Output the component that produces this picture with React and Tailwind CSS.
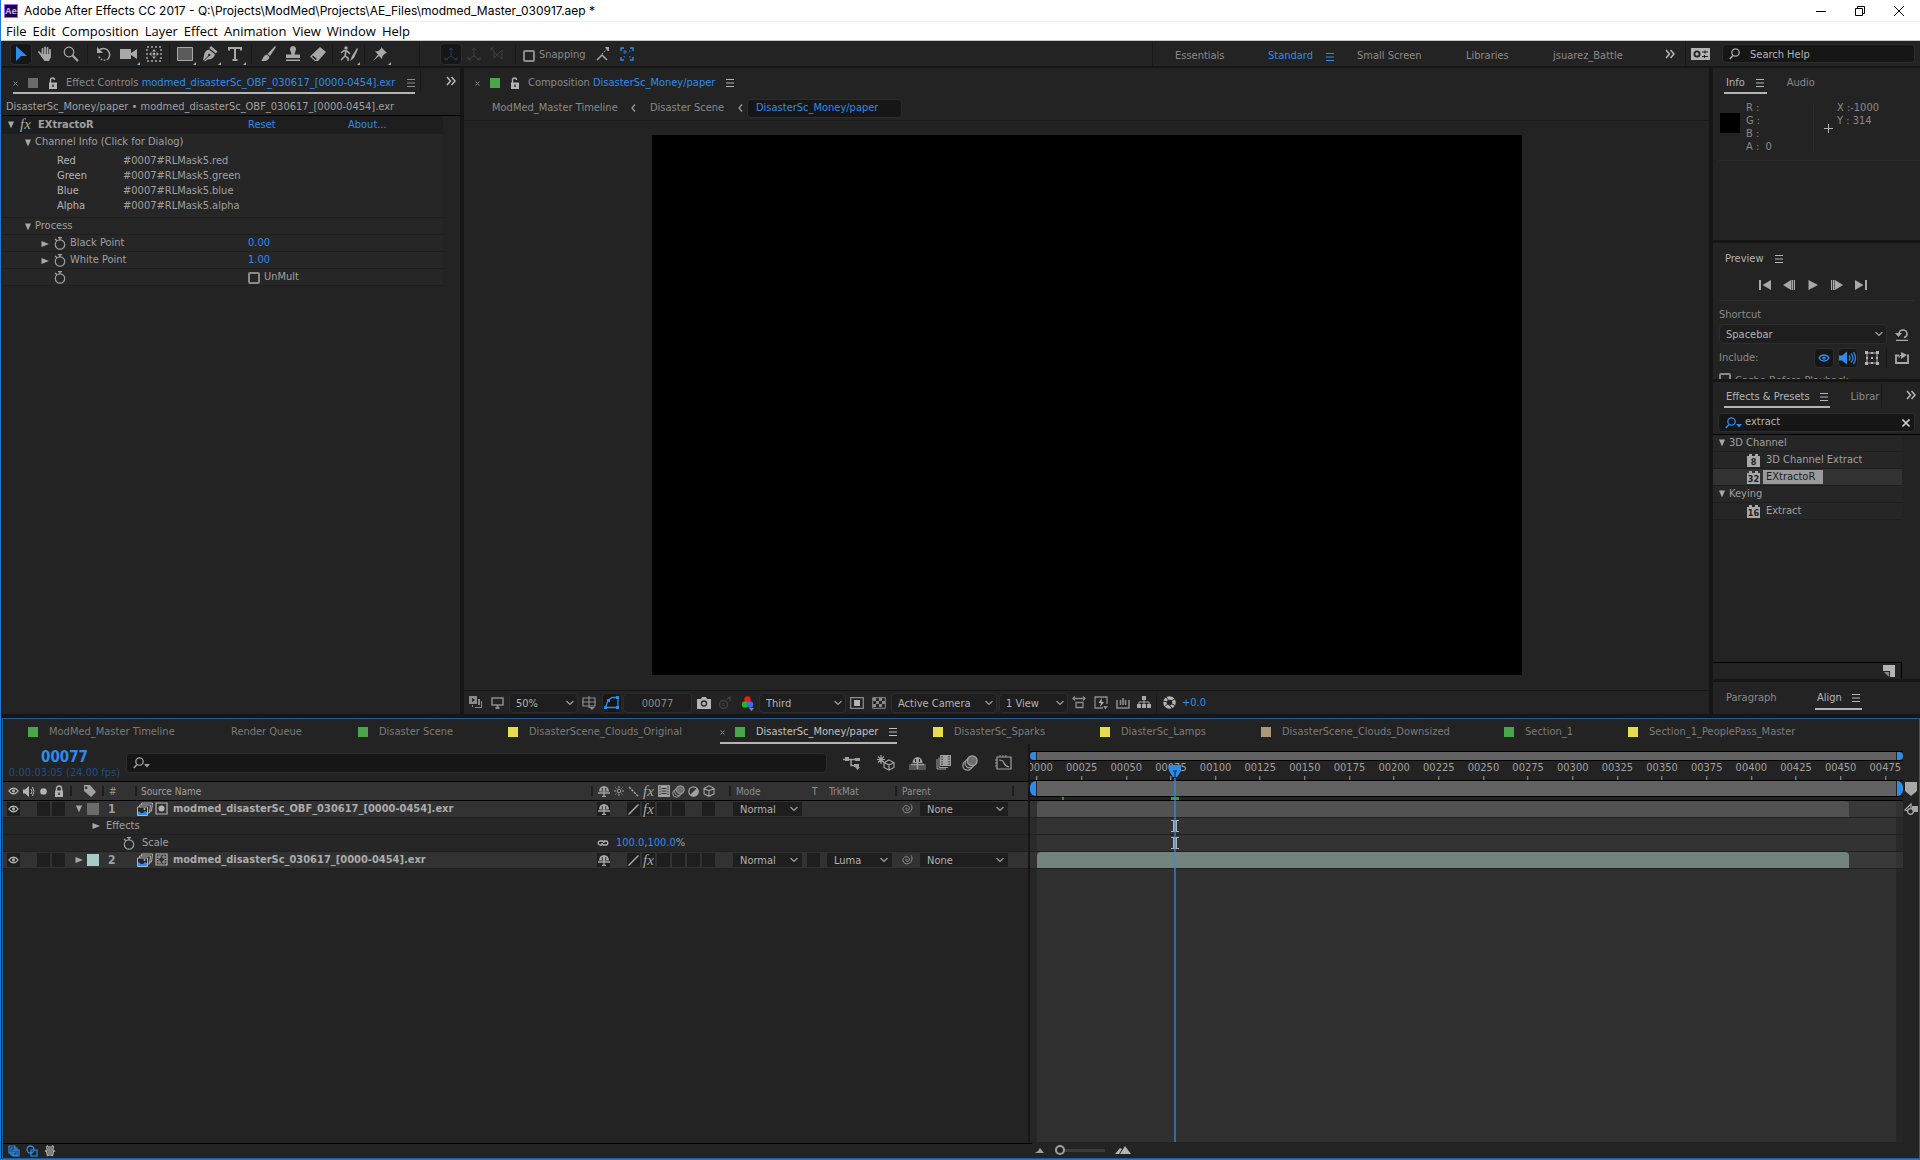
import React, { useState } from 'react';
import clsx from 'clsx';

const TOTAL_FRAMES = 481;
const CURRENT_FRAME = 77;
const ticks = Array.from({ length: 20 }, (_, i) => i * 25);
const pct = (frame) => `${(frame / TOTAL_FRAMES) * 100}%`;

const menus = ['File', 'Edit', 'Composition', 'Layer', 'Effect', 'Animation', 'View', 'Window', 'Help'];

const channels = [
  { name: 'Red', value: '#0007#RLMask5.red' },
  { name: 'Green', value: '#0007#RLMask5.green' },
  { name: 'Blue', value: '#0007#RLMask5.blue' },
  { name: 'Alpha', value: '#0007#RLMask5.alpha' }
];

/* ---------- icons ---------- */

const Icon = ({ w = 16, h = 16, className, children }) => (
  <svg width={w} height={h} viewBox={`0 0 ${w} ${h}`} fill="none" stroke="currentColor" className={clsx('shrink-0', className)} aria-hidden="true">
    {children}
  </svg>
);

const MenuIcon = ({ className }) => (
  <Icon w={8} h={8} className={className}>
    <path d="M0 .5h8M0 4h8M0 7.5h8" />
  </Icon>
);

const CloseX = () => (
  <Icon w={5} h={5} className="text-[#8a8a8a]">
    <path d="M.5.5l4 4M4.5.5l-4 4" />
  </Icon>
);

const DoubleChevron = () => (
  <Icon w={10} h={10} className="text-[#b4b4b4]">
    <path d="M1 1l3.500 4L1 9M5.500 1L9 5 5.500 9" strokeWidth="1.600" />
  </Icon>
);

const Lock = ({ open = false, className }) => (
  <Icon w={10} h={12} className={className}>
    <path d={open ? 'M2.500 6V3a2 2 0 014 0' : 'M2.500 6V3.500a2.500 2.500 0 015 0V6'} strokeWidth="1.400" />
    <path d="M1 5.500h8V12H1z" fill="currentColor" stroke="none" />
    <path d="M5 7.500v2.500" stroke="#232323" strokeWidth="1.400" />
  </Icon>
);

const Twirl = ({ open }) => (
  <Icon w={8} h={8} className="text-[#a8a8a8]">
    <path d={open ? 'M1 .5h6L4 7.500z' : 'M.5 1v6L8 4z'} fill="currentColor" stroke="none" />
  </Icon>
);

const Stopwatch = () => (
  <Icon w={12} h={13} className="text-[#a0a0a0]">
    <circle cx="6" cy="7.500" r="4.700" strokeWidth="1.200" />
    <path d="M4 .7h4M6 1v2M1 2l2 1.700" strokeWidth="1.300" />
  </Icon>
);

const Eye = ({ className }) => (
  <Icon w={12} h={10} className={className}>
    <path d="M1 5c2.500-4 7.500-4 10 0-2.500 4-7.500 4-10 0z" strokeWidth="1.400" />
    <circle cx="6" cy="5" r="1.600" fill="currentColor" stroke="none" />
  </Icon>
);

const Speaker = ({ className }) => (
  <Icon w={18} h={14} className={className}>
    <path d="M0 4.500h3L8 .5v13L3 9.500H0z" fill="currentColor" stroke="none" />
    <path d="M10 4.500q2 2.500 0 5M12 2.500q4 4.500 0 9M14.500 1q4 6 0 12" strokeWidth="1.300" />
  </Icon>
);

const Search = ({ drop = false, className }) => (
  <Icon w={17} h={12} className={className}>
    <circle cx="6.500" cy="4.500" r="3.700" strokeWidth="1.300" />
    <path d="M4 7.500L.8 11" strokeWidth="1.600" />
    {drop && <path d="M11 7h6l-3 3.500z" fill="currentColor" stroke="none" />}
  </Icon>
);

const Chevron = ({ className }) => (
  <Icon w={8} h={5} className={className}>
    <path d="M.5.5L4 4 7.500.5" strokeWidth="1.200" />
  </Icon>
);

const Fx = () => <span className="font-['Liberation_Serif',serif] text-[15px] leading-4 italic text-[#a8a8a8]">fx</span>;

const Shy = () => (
  <Icon w={12} h={12}>
    <path d="M1 6.500a5 5.500 0 0110 0z" fill="currentColor" stroke="none" />
    <path d="M4.300 3v3M7.700 3v3" stroke="#323232" />
    <path d="M0 8h12M6 6v6M4 11.500h4" strokeWidth="1.300" />
  </Icon>
);

const Sun = () => (
  <Icon w={10} h={10}>
    <circle cx="5" cy="5" r="1.800" />
    <path d="M5 0v2M5 8v2M0 5h2M8 5h2M1.500 1.500l1 1M7.500 7.500l1 1M8.500 1.500l-1 1M1.500 8.500l1-1" />
  </Icon>
);

const Film = () => (
  <Icon w={12} h={12}>
    <path d="M0 0h12v12H0z" fill="currentColor" stroke="none" />
    <path d="M2 1v10M10 1v10" stroke="#323232" strokeDasharray="1.500 1" />
    <path d="M3.500 3.500h5M3.500 6h5M3.500 8.500h5" stroke="#323232" />
  </Icon>
);

const MotionBlur = ({ size = 13 }) => (
  <svg width={size} height={size} viewBox="0 0 13 13" fill="none" stroke="currentColor" className="shrink-0" aria-hidden="true">
    <circle cx="4.500" cy="8.500" r="3.800" />
    <circle cx="6.300" cy="6.700" r="3.800" fill="#323232" />
    <circle cx="8.300" cy="4.700" r="4" fill="#6e6e6e" />
  </svg>
);

const HalfCircle = () => (
  <Icon w={11} h={11}>
    <circle cx="5.500" cy="5.500" r="4.700" strokeWidth="1.200" />
    <path d="M2 9A4.800 4.800 0 009 2z" fill="currentColor" stroke="none" />
  </Icon>
);

const Cube = ({ size = 12 }) => (
  <svg width={size} height={size} viewBox="0 0 12 12" fill="none" stroke="currentColor" className="shrink-0" aria-hidden="true">
    <path d="M6 .8l5 2.500v5.500l-5 2.500-5-2.500V3.300zM1 3.300l5 2.500 5-2.500M6 5.800v5.500" strokeWidth="1.100" />
  </svg>
);

const Spiral = () => (
  <Icon w={12} h={12} className="text-[#8a8a8a]">
    <path d="M6.500 5.500c-.8-.8-2 0-1.500 1.200.6 1.200 2.600 1 3.200-.5.700-2-1-3.800-3-3.600C2.800 2.900 1.500 5 2 7c.6 2.200 3 3.200 5.200 2.600C9.800 8.900 11.200 6.500 11 4c-.1-1-.5-2-1-2.700" />
  </Icon>
);

const FrameStack = () => (
  <Icon w={16} h={14}>
    <path d="M4.500 3V1h11l-1 8h-2M2.500 5V3h11l-1 8h-2" />
    <path d="M.5 5h10v8.500H.5z" fill="#232323" />
    <path d="M1 13V9.500h1.500L4 11h2l2-2 2 1v3z" fill="#2d8ceb" stroke="none" />
    <circle cx="7.500" cy="7" r="1" fill="currentColor" stroke="none" />
  </Icon>
);

const MatteIcon = ({ luma }) => (
  <Icon w={13} h={13}>
    <path d="M1 1h11v11H1z" strokeWidth="1.200" />
    {luma ? (
      <path d="M3 3h2v2H3zM8 3h2v2H8zM3 8h2v2H3zM8 8h2v2H8zM6 1.500v2M6 9.500v2M1.500 6.500h2M9.500 6.500h2" strokeWidth=".8" />
    ) : (
      <circle cx="6.500" cy="6.500" r="3" fill="currentColor" stroke="none" />
    )}
  </Icon>
);

const BinIcon = ({ bits }) => (
  <svg width="13" height="13" className="shrink-0" aria-hidden="true">
    <path d="M0 2h2V0h3v2h3V0h3v2h2v11H0z" fill="#a8a8a8" />
    <text x="6.500" y="11" textAnchor="middle" className="text-[9px] font-bold" fill="#1c1c1c">{bits}</text>
  </svg>
);

const AxisIcon = ({ className }) => (
  <Icon w={14} h={14} className={className}>
    <path d="M7 1v8M7 9l-5.500 3.500M7 9l5.500 3.500M5 3l2-2 2 2M1 10v2.700h3M13 10v2.700h-3" />
  </Icon>
);

/* ---------- controls ---------- */

const ToolButton = ({ label, active, flyout, className, children }) => (
  <button
    type="button"
    aria-label={label}
    className={clsx('relative flex h-[22px] w-[22px] shrink-0 items-center justify-center text-[#a8a8a8]', active && 'rounded-sm border border-[#2d2d2d] bg-[#161616]', className)}
  >
    {children}
    {flyout && (
      <svg width="3" height="3" className="absolute right-0 bottom-0" aria-hidden="true">
        <path d="M3 0v3H0z" fill="#a8a8a8" />
      </svg>
    )}
  </button>
);

const Divider = ({ className }) => <span className={clsx('h-5 w-px shrink-0 bg-[#1a1a1a]', className)} />;

const Select = ({ label, value, className, boxClass }) => (
  <span className={clsx('relative flex shrink-0', className)}>
    <select
      aria-label={label}
      defaultValue={value}
      className={clsx('h-full w-full appearance-none pt-0.5 pr-4 text-[11px] leading-3 text-[#b4b4b4] outline-none', boxClass || 'border border-[#2d2d2d] rounded-sm bg-[#1e1e1e] pl-1.5')}
    >
      <option>{value}</option>
    </select>
    <Chevron className="pointer-events-none absolute top-1/2 right-1 -translate-y-1/2 text-[#a0a0a0]" />
  </span>
);

const CheckBox = ({ label, className }) => (
  <label className={clsx('flex items-center gap-1', className)}>
    <input type="checkbox" className="h-3 w-3 appearance-none rounded-xs border-2 border-[#8a8a8a]" />
    {label}
  </label>
);

/* ---------- window chrome ---------- */

const TitleBar = () => (
  <header className="bg-white font-['Open_Sans','Noto_Sans',sans-serif] text-black">
    <div className="flex h-[22px] items-center border-b border-[#f0f0f0] pl-[3px]">
      <span className="flex h-3.5 w-3.5 items-center justify-center border border-[#9b6cf0] bg-[#1f0040] text-[9px] leading-3 font-bold text-[#c9a0ff]">Ae</span>
      <h1 className="ml-1.5 font-['Inter','Open_Sans',sans-serif] text-[12px] leading-5 whitespace-nowrap">
        Adobe After Effects CC 2017 - Q:\Projects\ModMed\Projects\AE_Files\modmed_Master_030917.aep *
      </h1>
      <div className="ml-auto flex pr-px">
        <button type="button" aria-label="Minimize" className="flex h-5 w-[39px] items-center justify-center">
          <Icon w={10} h={10}><path d="M0 5.500h10" /></Icon>
        </button>
        <button type="button" aria-label="Restore" className="flex h-5 w-[39px] items-center justify-center">
          <Icon w={10} h={10}><path d="M.5 2.500h7v7h-7zM2.500 2.500v-2h7v7h-2" /></Icon>
        </button>
        <button type="button" aria-label="Close" className="flex h-5 w-10 items-center justify-center">
          <Icon w={10} h={10}><path d="M0 0l10 10M10 0L0 10" /></Icon>
        </button>
      </div>
    </div>
    <nav className="flex h-[19px] items-center gap-1.5 border-b border-[#c8c8c8] pl-[5px] text-[13px] leading-[18px]">
      {menus.map((m) => (
        <button key={m} type="button">{m}</button>
      ))}
    </nav>
  </header>
);

const Toolbar = () => (
  <div className="flex h-[25px] items-center bg-[#232323]">
    <div className="flex items-center pl-[9px]">
      <ToolButton label="Selection" active>
        <Icon w={12} h={16} className="text-[#2d8ceb]"><path d="M1 0l11 10H6l-5 5z" fill="currentColor" stroke="none" /></Icon>
      </ToolButton>
      <ToolButton label="Hand" className="ml-[3px]">
        <Icon>
          <path d="M4.500 8V3M7 7.500V1.500M9.500 7.500V2M12 8.500V4M1 6l3.500 4.500" strokeWidth="1.800" strokeLinecap="round" />
          <path d="M3.600 8h9.300v3L11 15H6.500L3 10z" fill="currentColor" stroke="none" />
        </Icon>
      </ToolButton>
      <ToolButton label="Zoom" className="ml-[3px]">
        <Icon><circle cx="6" cy="6" r="4.800" strokeWidth="1.200" /><path d="M9.500 9.500L15 15" strokeWidth="2.200" /></Icon>
      </ToolButton>
      <Divider className="mx-[5px]" />
      <ToolButton label="Rotate">
        <Icon><path d="M3 4.500a6 6 0 019 8.500" strokeWidth="1.500" /><path d="M12 13a6 6 0 01-9.500-4" strokeDasharray="1.500 1.500" strokeWidth="1.500" /><path d="M1 1v6h6z" fill="currentColor" stroke="none" /></Icon>
      </ToolButton>
      <ToolButton label="Camera" flyout className="ml-[3px]">
        <Icon w={18}><path d="M0 3h11v10H0zM11 7l6-4v10l-6-4z" fill="currentColor" stroke="none" /></Icon>
      </ToolButton>
      <ToolButton label="Pan Behind" className="ml-[3px]">
        <Icon><path d="M1 1h14v14H1z" strokeDasharray="2 2" strokeWidth="1.400" /><path d="M8 3l2 2.500H6zM8 13l2-2.500H6zM3 8l2.500-2v4zM13 8l-2.500-2v4z" fill="currentColor" stroke="none" /><circle cx="8" cy="8" r="1.500" fill="currentColor" stroke="none" /></Icon>
      </ToolButton>
      <Divider className="mx-[4px]" />
      <ToolButton label="Rectangle" flyout>
        <Icon><path d="M.5 1.500h15v13H.5z" fill="#5a5a5a" /></Icon>
      </ToolButton>
      <ToolButton label="Pen" flyout className="ml-[3px]">
        <Icon>
          <path d="M9 0l6.500 5.500-1.800 2L7.200 2zM7 3.500l6 5c-1 3.500-3.500 5-7.500 5L3 15.500 1 14 2 9.500C2.500 6.500 4 4 7 3.500z" fill="currentColor" stroke="none" />
          <path d="M1.500 15l5-5" stroke="#232323" />
          <circle cx="7.200" cy="9" r="1.200" fill="#232323" stroke="none" />
        </Icon>
      </ToolButton>
      <ToolButton label="Type" flyout className="ml-[3px]">
        <Icon w={14}><path d="M1 4.500V2h12v2.500M7 2v12M4.500 14h5" strokeWidth="2" /></Icon>
      </ToolButton>
      <Divider className="mx-[5px]" />
      <ToolButton label="Brush">
        <Icon><path d="M15 0l1 1-6 9-2.500-2zM7 8.500L9.500 11c-1 4-5 4.500-8.500 4 2-1 1.500-5.500 6-6.500z" fill="currentColor" stroke="none" /></Icon>
      </ToolButton>
      <ToolButton label="Clone Stamp" className="ml-[3px]">
        <Icon><path d="M8 0a3.200 3.200 0 012.500 5L9.500 8.500H15V12H1V8.500h5.500L5.500 5A3.200 3.200 0 018 0zM1 13.500h14V15H1z" fill="currentColor" stroke="none" /></Icon>
      </ToolButton>
      <ToolButton label="Eraser" className="ml-[3px]">
        <Icon><path d="M10 1l6 5-8 9H5L0 10.500zM3 9.500l-1 1.200L5.500 14 7 13z" fillRule="evenodd" fill="currentColor" stroke="none" /></Icon>
      </ToolButton>
      <Divider className="mr-[5px] ml-[3px]" />
      <ToolButton label="Roto Brush" flyout>
        <Icon w={18}><circle cx="6" cy="2" r="1.700" fill="currentColor" stroke="none" /><path d="M1 7l3-2.500 3 .5 3 3M6 5l-1 5 3 2v3M5 10l-4 4" strokeWidth="1.600" /><path d="M17 2l-5 8-2 5 4-3 4-9z" fill="currentColor" stroke="none" /></Icon>
      </ToolButton>
      <Divider className="mx-[4px]" />
      <ToolButton label="Puppet Pin" flyout>
        <Icon><path d="M9 1l6 6-2 .5-2.500 2.500-.5 3-3-3L1 15l5-6.500-3-3 3.500-.5L9 2.500z" fill="currentColor" stroke="none" /></Icon>
      </ToolButton>
    </div>
    <Divider className="ml-7 h-full" />
    <div className="ml-5 flex items-center gap-px">
      <ToolButton label="Local Axis" active><AxisIcon className="text-[#1d3f63]" /></ToolButton>
      <ToolButton label="World Axis"><AxisIcon className="text-[#404040]" /></ToolButton>
      <ToolButton label="View Axis">
        <Icon w={14} h={14} className="text-[#404040]"><path d="M1 1l3 3M4 4v7l8-8v9L4 5M1 4V1h3" /></Icon>
      </ToolButton>
    </div>
    <Divider className="mx-[7px]" />
    <CheckBox label="Snapping" className="pt-1 text-[11px] text-[#8a8a8a]" />
    <ToolButton label="Snap Edges" className="ml-1.5">
      <Icon w={14} h={14}><path d="M1 13l5-5 5 5" strokeWidth="1.500" /><path d="M6 7l4-4" strokeDasharray="1.500 1" /><path d="M9 0h4v4h-1.500z" fill="currentColor" stroke="none" /></Icon>
    </ToolButton>
    <ToolButton label="Snap Features" className="ml-0.5">
      <Icon w={14} h={14} className="text-[#2d8ceb]"><path d="M1 4V1h3M10 1h3v3M13 10v3h-3M4 13H1v-3" strokeWidth="1.400" /><path d="M4 4h2v2H4zM9 4h1v1M4 9v1h1M9 10h1V9" strokeWidth=".8" /></Icon>
    </ToolButton>

    <nav className="ml-auto flex h-full items-center border-l border-[#1a1a1a] pl-[22px] text-[11px] text-[#8a8a8a]">
      <button type="button" className="w-[93px] pt-1.5 text-left">Essentials</button>
      <button type="button" className="flex w-[89px] items-center gap-[13px] pt-1.5 text-[#2d8ceb]">Standard <MenuIcon /></button>
      <button type="button" className="w-[109px] pt-1.5 text-left">Small Screen</button>
      <button type="button" className="w-[87px] pt-1.5 text-left">Libraries</button>
      <button type="button" className="w-[112px] pt-1.5 text-left">jsuarez_Battle</button>
      <button type="button" aria-label="More workspaces"><DoubleChevron /></button>
    </nav>
    <Divider className="ml-[10px] h-full" />
    <button type="button" aria-label="Sync Settings" className="ml-[5px] flex">
      <Icon w={19} h={12} className="text-[#b4b4b4]">
        <path d="M0 0h19v12H0z" fill="currentColor" stroke="none" />
        <circle cx="6" cy="6" r="2.600" stroke="#232323" strokeWidth="1.800" />
        <path d="M11 4h6M14 2.500V5.500M11 8.500h6M13.500 7v3" stroke="#232323" strokeWidth="1.200" />
      </Icon>
    </button>
    <label className="mr-[5px] ml-3 flex h-[19px] w-[193px] items-center gap-1 rounded-sm border border-[#2d2d2d] bg-[#161616] pl-1.5 text-[#a8a8a8]">
      <Search />
      <input type="text" aria-label="Search Help" placeholder="Search Help" className="w-full bg-transparent pt-0.5 text-[11px] leading-4 outline-none placeholder:text-[#b4b4b4]" />
    </label>
  </div>
);

/* ---------- effect controls ---------- */

const EffectRow = ({ className, children }) => (
  <div className={clsx('flex h-[17px] items-center border-t border-[#1e1e1e] pt-px', className)}>{children}</div>
);

const EffectControls = () => (
  <section className="flex w-[458px] shrink-0 flex-col bg-[#232323]">
    <div className="flex h-[31px] items-start">
      <div className="ml-[11px] flex h-[26px] items-center border-b-2 border-[#b4b4b4] pt-1.5">
        <CloseX />
        <span className="ml-2.5 h-2.5 w-2.5 bg-[#6b6b6b]" />
        <Lock open className="ml-2.5 text-[#b4b4b4]" />
        <span className="ml-2 w-[340px] text-[11px] whitespace-nowrap text-[#8a8a8a]">
          Effect Controls <span className="text-[#2d8ceb]">modmed_disasterSc_OBF_030617_[0000-0454].exr</span>
        </span>
        <MenuIcon className="ml-px text-[#8a8a8a]" />
      </div>
      <span className="ml-[5px] h-6 w-px bg-[#1a1a1a]" />
      <button type="button" aria-label="More panels" className="mt-2 mr-1 ml-auto"><DoubleChevron /></button>
    </div>
    <p className="flex h-[17px] items-center border-b border-black pt-px pl-1 text-[11px] text-[#a0a0a0]">
      DisasterSc_Money/paper • modmed_disasterSc_OBF_030617_[0000-0454].exr
    </p>
    <div className="mr-[17px] bg-[#262626] text-[11px] text-[#a0a0a0]">
      <div className="flex h-[18px] items-center bg-[#1e1e1e] pl-[5px]">
        <Twirl open />
        <span className="ml-[5px] w-[18px]"><Fx /></span>
        <span className="w-[210px] font-bold">EXtractoR</span>
        <a href="#reset" className="w-[100px] text-[#2d8ceb]">Reset</a>
        <a href="#about" className="text-[#2d8ceb]">About...</a>
      </div>
      <div className="flex h-[19px] items-center pb-0.5 pl-[22px]">
        <Twirl open />
        <span className="ml-[3px]">Channel Info (Click for Dialog)</span>
      </div>
      <dl className="grid grid-cols-[66px_1fr] gap-x-0 pb-1 pl-[55px] leading-[15px]">
        {channels.map((c) => (
          <React.Fragment key={c.name}>
            <dt className="text-[#b4b4b4]">{c.name}</dt>
            <dd>{c.value}</dd>
          </React.Fragment>
        ))}
      </dl>
      <EffectRow className="pl-[22px]">
        <Twirl open />
        <span className="ml-[3px]">Process</span>
      </EffectRow>
      <EffectRow className="pl-[39px]">
        <Twirl />
        <span className="ml-[5px]"><Stopwatch /></span>
        <span className="ml-1 w-[178px]">Black Point</span>
        <span className="text-[#2d8ceb]">0.00</span>
      </EffectRow>
      <EffectRow className="pl-[39px]">
        <Twirl />
        <span className="ml-[5px]"><Stopwatch /></span>
        <span className="ml-1 w-[178px]">White Point</span>
        <span className="text-[#2d8ceb]">1.00</span>
      </EffectRow>
      <EffectRow className="h-[18px] border-b pl-[52px]">
        <span className="w-[194px]"><Stopwatch /></span>
        <CheckBox label="UnMult" />
      </EffectRow>
    </div>
  </section>
);

/* ---------- composition viewer ---------- */

const BackChevron = () => (
  <Icon w={5} h={8} className="text-[#a0a0a0]"><path d="M4 .5L1 4l3 3.500" strokeWidth="1.200" /></Icon>
);

const FootIcon = ({ label, active, className, children }) => (
  <button type="button" aria-label={label} className={clsx('flex h-5 w-5 shrink-0 items-center justify-center text-[#8a8a8a]', active && 'rounded-sm border border-[#2d2d2d] bg-[#161616]', className)}>
    {children}
  </button>
);

const Composition = () => (
  <section className="flex min-w-0 flex-1 flex-col bg-[#232323] text-[11px]">
    <div className="flex h-7 items-center pt-0.5 pl-[11px] text-[#8a8a8a]">
      <CloseX />
      <span className="ml-[10px] h-2.5 w-2.5 bg-[#4aa64a]" />
      <Lock open className="ml-[10px] text-[#b4b4b4]" />
      <span className="ml-2">Composition <span className="text-[#2d8ceb]">DisasterSc_Money/paper</span></span>
      <MenuIcon className="ml-[11px] text-[#b4b4b4]" />
    </div>
    <nav className="flex h-[25px] items-center border-b border-[#1a1a1a] pl-7 text-[#8a8a8a]">
      <button type="button" className="w-[139px] text-left">ModMed_Master Timeline</button>
      <BackChevron />
      <button type="button" className="ml-[14px] w-[88px] text-left">Disaster Scene</button>
      <BackChevron />
      <button type="button" className="ml-1 h-[19px] w-[155px] rounded-sm border border-[#2d2d2d] bg-[#161616] pl-2 text-left text-[#2d8ceb]">DisasterSc_Money/paper</button>
    </nav>
    <div className="flex flex-1 justify-center border-b border-[#161616] pt-3.5 pb-[15px]">
      <div className="h-[540px] w-[870px] bg-black" />
    </div>
    <div className="flex h-[23px] items-center pl-0.5">
      <FootIcon label="Always Preview">
        <Icon w={14} h={13}><path d="M0 0h8v8H0zM9 3h2v6H4v2H3V9h6zM12 5h1v7H6v-1h6z" fill="currentColor" stroke="none" /><path d="M3 2l3 2-3 2z" fill="#232323" stroke="none" /></Icon>
      </FootIcon>
      <FootIcon label="Main Viewer" className="ml-px">
        <Icon w={13} h={12}><path d="M1 1h11v7H1z" strokeWidth="1.500" /><path d="M4.500 11h4M6.500 8v3" strokeWidth="2" /></Icon>
      </FootIcon>
      <Select label="Magnification" value="50%" className="ml-[2px] h-5 w-[69px]" />
      <FootIcon label="Grid Options" className="ml-px">
        <Icon w={14} h={14}><path d="M1 2h12v8H1zM7 0v12M0 6h14" strokeWidth="1.200" /><path d="M7 11h6l-3 3z" fill="currentColor" stroke="none" /></Icon>
      </FootIcon>
      <FootIcon label="Mask Visibility" active className="ml-[3px]">
        <Icon w={16} h={13} className="text-[#2d8ceb]"><path d="M1.500 11.500L4 4.500l4-3h6v10z" strokeWidth="1.300" /><path d="M0 10h3v3H0zM12 10h3v3h-3zM12 0h3v3h-3zM3 3h3v3H3z" fill="currentColor" stroke="none" /></Icon>
      </FootIcon>
      <input type="text" aria-label="Current Frame" defaultValue="00077" className="ml-px h-5 w-[69px] rounded-sm border border-[#2d2d2d] bg-[#1e1e1e] pt-px text-center text-[11px] text-[#8a8a8a]" />
      <FootIcon label="Snapshot" className="ml-0.5">
        <Icon w={14} h={12} className="text-[#b4b4b4]"><path d="M0 2h4l1-2h4l1 2h4v10H0z" fill="currentColor" stroke="none" /><circle cx="7" cy="6.500" r="2.500" stroke="#232323" strokeWidth="1.300" /></Icon>
      </FootIcon>
      <FootIcon label="Show Snapshot" className="ml-px">
        <Icon w={14} h={14} className="text-[#404040]"><circle cx="5.500" cy="8.500" r="4" strokeWidth="1.500" /><circle cx="5.500" cy="8.500" r="1.200" /><path d="M9 3l3-2v4" strokeWidth="1.500" /></Icon>
      </FootIcon>
      <FootIcon label="Show Channel" className="ml-0.5">
        <Icon w={14} h={16}>
          <g stroke="none"><circle cx="7.500" cy="4.500" r="3.200" fill="#f01818" /><circle cx="5" cy="9.500" r="3.200" fill="#1db81d" /><circle cx="10" cy="9.500" r="3.200" fill="#3a6cf0" /><path d="M9 13h5l-2.500 3z" fill="currentColor" /></g>
        </Icon>
      </FootIcon>
      <Select label="Resolution" value="Third" className="ml-[2px] h-5 w-[87px]" />
      <FootIcon label="Region of Interest" className="ml-px">
        <Icon w={14} h={12}><path d="M.7.7h12.600v10.600H.7z" strokeWidth="1.300" /><path d="M4 3h6v6H4z" fill="#b4b4b4" stroke="none" /></Icon>
      </FootIcon>
      <FootIcon label="Transparency Grid" className="ml-0.5">
        <Icon w={14} h={12}><path d="M.7.7h12.600v10.600H.7z" /><path d="M1 1h3v3H1zM7 1h3v3H7zM4 4h3v3H4zM10 4h3v3h-3zM1 7h3v3H1zM7 7h3v3H7z" fill="currentColor" stroke="none" /></Icon>
      </FootIcon>
      <Select label="3D View" value="Active Camera" className="ml-[2px] h-5 w-[106px]" />
      <Select label="View Layout" value="1 View" className="ml-0.5 h-5 w-[69px]" />
      <FootIcon label="Pixel Aspect" className="ml-px">
        <Icon w={14} h={13}><path d="M1 2.500h12M3 .5l-2 2 2 2M11 .5l2 2-2 2M4 6.500h7v5H4z" strokeWidth="1.300" /></Icon>
      </FootIcon>
      <FootIcon label="Fast Previews" className="ml-[2px]">
        <Icon w={14} h={14}><path d="M9 12H1V1h12v7" strokeWidth="1.300" /><path d="M8 2L4.500 7H7l-1 4 4-5H7.500z" fill="#b4b4b4" stroke="none" /><path d="M9 10h5l-2.500 3.500z" fill="currentColor" stroke="none" /></Icon>
      </FootIcon>
      <FootIcon label="Timeline" className="ml-0.5">
        <Icon w={14} h={12}><path d="M1 3v8h12V3M4.500 3v5M7 1v7M9.500 3v5" strokeWidth="1.600" /></Icon>
      </FootIcon>
      <FootIcon label="Flowchart" className="ml-px">
        <Icon w={14} h={13} className="text-[#a8a8a8]"><path d="M5 0h4v4H5zM0 8h4v4H0zM5 8h4v4H5zM10 8h4v4h-4z" fill="currentColor" stroke="none" /><path d="M7 4v4M2 8V6h10v2" /></Icon>
      </FootIcon>
      <Divider className="mx-[2px]" />
      <FootIcon label="Reset Exposure">
        <Icon w={13} h={13} className="text-[#b4b4b4]"><circle cx="6.500" cy="6.500" r="4.500" strokeWidth="3.500" /><path d="M3 1l3 4M12 3L7.500 5M12 9.500L8 7.500M9 12L6 8.500M2 10.500l3-3M0 5l4.500 1" stroke="#232323" /></Icon>
      </FootIcon>
      <span className="ml-[3px] pt-px text-[#2d8ceb]">+0.0</span>
    </div>
  </section>
);

/* ---------- right column ---------- */

const PanelTab = ({ active, className, children }) => (
  <button type="button" className={clsx('flex h-full items-center border-b-2 px-0.5 pt-1.5', active ? 'border-[#b4b4b4] text-[#b4b4b4]' : 'border-transparent text-[#8a8a8a]', className)}>
    {children}
  </button>
);

const InfoPanel = () => (
  <section className="h-[172px] bg-[#232323] text-[#8a8a8a]">
    <div className="flex h-[26px] pl-[11px]">
      <PanelTab active>Info <MenuIcon className="ml-[11px] mr-px" /></PanelTab>
      <PanelTab className="ml-[18px]">Audio</PanelTab>
    </div>
    <div className="ml-1.5 flex h-[67px] border-b border-[#2d2d2d] pt-[7px]">
      <span className="mt-3 ml-px h-5 w-5 bg-black" />
      <ul className="ml-[6px] w-[67px] leading-[13px]">
        <li>R :</li>
        <li>G :</li>
        <li>B :</li>
        <li>A : &nbsp;0</li>
      </ul>
      <span className="mt-0.5 h-[50px] w-px bg-[#2d2d2d]" />
      <Icon w={9} h={9} className="mt-[23px] ml-[10px] text-[#b4b4b4]"><path d="M0 4.500h9M4.500 0v9" /></Icon>
      <ul className="ml-1 leading-[13px]">
        <li>X :-1000</li>
        <li>Y : 314</li>
      </ul>
    </div>
  </section>
);

const PreviewPanel = () => (
  <section className="h-[136px] overflow-hidden bg-[#232323] text-[#8a8a8a]">
    <h2 className="flex h-[31px] items-center gap-3 pt-px pl-3 text-[#b4b4b4]">Preview <MenuIcon /></h2>
    <div className="mx-1.5 flex h-[27px] items-center gap-3 border-b border-[#2d2d2d] pb-1 pl-10 text-[#a8a8a8]">
      <button type="button" aria-label="First Frame"><Icon w={12} h={10}><path d="M0 0h2v10H0zM12 0v10L3.500 5z" fill="currentColor" stroke="none" /></Icon></button>
      <button type="button" aria-label="Previous Frame"><Icon w={12} h={10}><path d="M8 0v10L0 5zM8.500 0H10v10H8.500zM10.800 0H12v10h-1.200z" fill="currentColor" stroke="none" /></Icon></button>
      <button type="button" aria-label="Play"><Icon w={12} h={10}><path d="M1.500 0v10L11 5z" fill="currentColor" stroke="none" /></Icon></button>
      <button type="button" aria-label="Next Frame"><Icon w={12} h={10}><path d="M0 0h1.200v10H0zM2 0h1.500v10H2zM4 0v10l8-5z" fill="currentColor" stroke="none" /></Icon></button>
      <button type="button" aria-label="Last Frame"><Icon w={12} h={10}><path d="M0 0v10l8.500-5zM10 0h2v10h-2z" fill="currentColor" stroke="none" /></Icon></button>
    </div>
    <p className="flex h-[23px] items-center pt-[5px] pl-1.5">Shortcut</p>
    <div className="flex items-center pl-1.5">
      <Select label="Shortcut" value="Spacebar" className="h-5 w-[168px]" />
      <button type="button" aria-label="Reset" className="ml-2 text-[#a8a8a8]">
        <Icon w={14} h={13}><path d="M4 6a4 4 0 118 0c0 2-1 3-3 3.500M1 12.500h12" strokeWidth="1.600" /><path d="M0 5h7l-3.500 4z" fill="currentColor" stroke="none" /></Icon>
      </button>
    </div>
    <div className="mt-[3px] flex h-[22px] items-center pl-1.5">
      <span className="w-[95px] pt-px">Include:</span>
      <FootIcon label="Include Video" active><Eye className="text-[#2d8ceb]" /></FootIcon>
      <FootIcon label="Include Audio" active className="ml-1"><Speaker className="text-[#2d8ceb]" /></FootIcon>
      <FootIcon label="Include Overlays" className="ml-1">
        <Icon w={14} h={14} className="text-[#b4b4b4]"><path d="M2 2h10v10H2z" /><path d="M0 0h3v3H0zM11 0h3v3h-3zM0 11h3v3H0zM11 11h3v3h-3zM6 1h2v2H6zM6 11h2v2H6zM1 6h2v2H1zM11 6h2v2h-2zM6 6h2v2H6z" fill="currentColor" stroke="none" /></Icon>
      </FootIcon>
      <Divider className="mx-1" />
      <FootIcon label="Loop" className="ml-px">
        <Icon w={14} h={12} className="text-[#a8a8a8]"><path d="M4 3.500H1V11h12V3.500h-1" strokeWidth="1.800" /><path d="M6 0v7l6-4z" fill="currentColor" stroke="none" /><path d="M4 6q0-3 3-3" /></Icon>
      </FootIcon>
    </div>
    <CheckBox label={<span className="pt-1">Cache Before Playback</span>} className="pl-1.5" />
  </section>
);

const presets = [
  { group: '3D Channel' },
  { name: '3D Channel Extract', bits: '8' },
  { name: 'EXtractoR', bits: '32', selected: true },
  { group: 'Keying' },
  { name: 'Extract', bits: '16' }
];

const EffectsPresets = () => {
  const [query, setQuery] = useState('extract');
  return (
    <section className="flex flex-1 flex-col bg-[#232323] text-[#a0a0a0]">
      <div className="flex h-[26px] items-center pl-[11px]">
        <PanelTab active>Effects &amp; Presets <MenuIcon className="ml-[10px]" /></PanelTab>
        <PanelTab className="ml-[19px]">Librar</PanelTab>
        <span className="h-6 w-px bg-[#1a1a1a]" />
        <button type="button" aria-label="More panels" className="mr-1 ml-auto"><DoubleChevron /></button>
      </div>
      <label className="mx-[5px] mt-[5px] flex h-[19px] items-center rounded-sm border border-[#2d2d2d] bg-[#161616] pr-1 pl-1.5">
        <Search drop className="text-[#2d8ceb]" />
        <input type="text" aria-label="Search effects" value={query} onChange={(e) => setQuery(e.target.value)} className="ml-[3px] w-full bg-transparent text-[#b4b4b4] outline-none" />
        <Icon w={8} h={8} className="text-[#c8c8c8]"><path d="M.5.5l7 7M7.500.5l-7 7" strokeWidth="1.600" /></Icon>
      </label>
      <div className="mt-0.5 border-t border-black" />
      <ul className="mr-[18px] flex-1">
        {presets.map((p) => (
          <li key={p.group || p.name} className={clsx('flex h-[17px] items-center border-b border-[#1e1e1e]', p.group ? 'pl-[5px]' : 'gap-[3px] pl-[34px]', p.selected ? 'bg-[#323232]' : 'bg-[#262626]')}>
            {p.group ? <Twirl open /> : <BinIcon bits={p.bits} />}
            <span className={clsx('px-[3px] leading-[14px]', p.selected && 'bg-[#9a9a9a] pr-2 text-[#1e1e1e]')}>{p.group || p.name}</span>
          </li>
        ))}
      </ul>
      <div className="mr-[18px] flex h-[17px] items-center justify-end border-t border-r border-black pr-1.5">
        <Icon w={12} h={12}><path d="M0 0h12v12H7V6H0z" fill="#b4b4b4" stroke="none" /><path d="M1 7h5v5z" fill="#8a8a8a" stroke="none" /></Icon>
      </div>
    </section>
  );
};

const RightColumn = () => (
  <aside className="flex w-[207px] shrink-0 flex-col gap-[3px] text-[11px]">
    <InfoPanel />
    <PreviewPanel />
    <EffectsPresets />
    <section className="h-8 bg-[#232323]">
      <div className="flex h-7 pl-[11px]">
        <PanelTab className="w-[91px]">Paragraph</PanelTab>
        <PanelTab active>Align <MenuIcon className="ml-[10px]" /></PanelTab>
      </div>
    </section>
  </aside>
);

/* ---------- timeline ---------- */

const compTabs = [
  { name: 'ModMed_Master Timeline', color: 'bg-[#4aa64a]', width: 'w-[182px]' },
  { name: 'Render Queue', width: 'w-[148px]' },
  { name: 'Disaster Scene', color: 'bg-[#4aa64a]', width: 'w-[150px]' },
  { name: 'DisasterScene_Clouds_Original', color: 'bg-[#e6dc4e]', width: 'w-[212px]' },
  { name: 'DisasterSc_Money/paper', color: 'bg-[#4aa64a]', active: true },
  { name: 'DisasterSc_Sparks', color: 'bg-[#e6dc4e]', width: 'w-[167px]' },
  { name: 'DiasterSc_Lamps', color: 'bg-[#e6dc4e]', width: 'w-[161px]' },
  { name: 'DisasterScene_Clouds_Downsized', color: 'bg-[#ab9876]', width: 'w-[243px]' },
  { name: 'Section_1', color: 'bg-[#4aa64a]', width: 'w-[124px]' },
  { name: 'Section_1_PeoplePass_Master', color: 'bg-[#e6dc4e]' }
];

const TimelineTabs = () => (
  <nav className="flex h-[25px] items-center pl-[25px] whitespace-nowrap text-[#7c7c7c]">
    {compTabs.map((t) =>
      t.active ? (
        <button key={t.name} type="button" className="mr-9 flex h-full w-[177px] items-center border-b-2 border-[#b4b4b4] pt-[3px] text-[#c0c0c0]">
          <CloseX />
          <span className={clsx('ml-2.5 h-2.5 w-2.5', t.color)} />
          <span className="ml-[11px]">{t.name}</span>
          <MenuIcon className="ml-auto" />
        </button>
      ) : (
        <button key={t.name} type="button" className={clsx('flex items-center gap-[11px] pt-px text-left', t.width, !t.color && 'pl-[21px]')}>
          {t.color && <span className={clsx('h-2.5 w-2.5', t.color)} />}
          {t.name}
        </button>
      )
    )}
  </nav>
);

const TimelineControls = () => (
  <div className="flex h-[38px] items-center border-b border-black">
    <div className="w-[123px] pt-1 text-center">
      <p className="text-[15px] leading-4 font-bold text-[#2d8ceb]">00077</p>
      <p className="text-[11px] leading-[15px] text-[#1b4f85]">0:00:03:05 (24.00 fps)</p>
    </div>
    <label className="flex h-5 flex-1 items-center rounded-sm border border-[#2d2d2d] bg-[#161616] pl-1.5 text-[#a0a0a0]">
      <Search drop />
      <input type="text" aria-label="Search layers" className="w-full bg-transparent outline-none" />
    </label>
    <div className="flex w-[201px] items-center pl-4 text-[#a0a0a0]">
      <button type="button" aria-label="Mini-Flowchart" className="w-[34px]">
        <Icon w={18} h={14}><path d="M0 3.500h9M9 3.500h3M8 3.500v6h4" strokeWidth="1.500" /><path d="M2 1h4v4H2zM12 2h5v3h-5zM11 8h5v3h-5zM12 11h5l-2.500 3z" fill="currentColor" stroke="none" /></Icon>
      </button>
      <button type="button" aria-label="Draft 3D" className="flex w-8">
        <Icon w={18} h={16}><path d="M4 0v9M0 4.500h8M1 1.500l6 6M7 1.500l-6 6M12 5l5 2.500v5L12 15l-5-2.500v-5zM7 7.500l5 2.500 5-2.500M12 10v5" strokeWidth="1.200" /></Icon>
      </button>
      <button type="button" aria-label="Hide Shy Layers" className="w-[27px]">
        <Icon w={17} h={14}><path d="M0 8h17v6H0z" fill="#555" stroke="none" /><path d="M3.500 7a5 6 0 0110 0z" fill="currentColor" stroke="none" /><path d="M6.500 3v3M10.500 3v3" stroke="#232323" /><path d="M2 8.500h13M8.500 7v6" strokeWidth="1.500" /></Icon>
      </button>
      <button type="button" aria-label="Frame Blending" className="w-[26px]">
        <Icon w={15} h={15}><path d="M1 4v10h9M3 2.500v10h9" /><path d="M4 0h11v11H4z" fill="currentColor" stroke="none" /><path d="M6 1v9M13 1v9" stroke="#232323" strokeDasharray="1.500 1" /></Icon>
      </button>
      <button type="button" aria-label="Motion Blur" className="w-[33px]"><MotionBlur size={16} /></button>
      <button type="button" aria-label="Graph Editor">
        <Icon w={17} h={15}><path d="M2 2h14v12H2zM4 5q4 0 5 3t5 4" strokeWidth="1.200" /><path d="M0 5h2M0 8h2M0 11h2M5 0v2M8 0v2M11 0v2" /></Icon>
      </button>
    </div>
  </div>
);

const Cell = ({ filled, className, children }) => (
  <span className={clsx('mr-0.5 flex h-3.5 w-[13px] items-center justify-center', filled && 'bg-[#1e1e1e]', className)}>{children}</span>
);

const HeadSep = () => <span className="h-2.5 w-0.5 shrink-0 bg-[#1c1c1c]" />;

const LayerHeader = () => (
  <div className="flex h-[19px] items-center border-b border-black bg-[#323232] pl-1 text-[10px] text-[#8f8f8f]">
    <div className="flex w-[63px] text-[#b4b4b4]">
      <Cell><Eye className="w-[11px]" /></Cell>
      <Cell><Icon w={12} h={11}><path d="M0 3.500h2L6 0v11L2 7.500H0z" fill="currentColor" stroke="none" /><path d="M8 3q2 2.500 0 5M9.500 1q3 4.500 0 9" /></Icon></Cell>
      <Cell><Icon w={7} h={7}><circle cx="3.500" cy="3.500" r="3.300" fill="currentColor" stroke="none" /></Icon></Cell>
      <Cell><Lock /></Cell>
    </div>
    <HeadSep />
    <span className="flex w-[30px] justify-end pr-[6px]">
      <Icon w={12} h={12}><path d="M0 0h6l6 7-5 5-7-6zM2.500 1.500a1.300 1.300 0 100 2.500 1.300 1.300 0 000-2.500z" fillRule="evenodd" fill="#a0a0a0" stroke="none" /></Icon>
    </span>
    <HeadSep />
    <span className="w-[31px] pl-[5px] italic">#</span>
    <HeadSep />
    <span className="flex-1 pl-[4px] text-[#a0a0a0]">Source Name</span>
    <HeadSep />
    <div className="flex w-[136px] pl-1 text-[#a0a0a0]">
      <Cell><Shy /></Cell>
      <Cell><Sun /></Cell>
      <Cell><Icon w={11} h={11}><path d="M1 1l9 9" strokeWidth="1.500" strokeDasharray="2.500 1" /></Icon></Cell>
      <Cell><Fx /></Cell>
      <Cell><Film /></Cell>
      <Cell><MotionBlur /></Cell>
      <Cell><HalfCircle /></Cell>
      <Cell><Cube /></Cell>
    </div>
    <HeadSep />
    <span className="w-[76px] pl-[5px]">Mode</span>
    <span className="w-[17px] pl-[5px]">T</span>
    <span className="w-[71px] pl-[5px]">TrkMat</span>
    <HeadSep />
    <span className="w-[115px] pl-[5px]">Parent</span>
    <HeadSep />
    <span className="w-[14px]" />
  </div>
);

const layerSelect = 'bg-[#1e1e1e] pl-[7px]';

const LayerRow = ({ index, name, open, color, trkMat, cells }) => (
  <div className="flex h-[17px] items-center border-b border-[#202020] bg-[#323232] pl-1">
    <div className="flex w-[68px]">
      <Cell filled><Eye className="w-[11px] text-[#b4b4b4]" /></Cell>
      <Cell />
      <Cell filled />
      <Cell filled />
    </div>
    <Twirl open={open} />
    <span className={clsx('ml-1 h-3 w-3', color)} />
    <span className="w-[38px] pl-[9px] text-[12px] font-bold">{index}</span>
    <span className="flex gap-0.5 text-[#b4b4b4]">
      <FrameStack />
      <MatteIcon luma={!open} />
    </span>
    <span className="flex-1 pt-px pl-[5px] font-bold whitespace-nowrap text-[#acacac]">{name}</span>
    <div className="flex w-[136px] text-[#a8a8a8]">
      <Cell filled={cells[0]}><Shy /></Cell>
      <Cell />
      <Cell filled={cells[2]}><Icon w={11} h={11}><path d="M.5 10.500l10-10" strokeWidth="1.500" /></Icon></Cell>
      <Cell filled={cells[3]}><Fx /></Cell>
      <Cell filled={cells[4]} />
      <Cell filled={cells[5]} />
      <Cell filled={cells[6]} />
      <Cell filled={cells[7]} />
    </div>
    <Select label="Mode" value="Normal" className="h-3.5 w-[69px]" boxClass={layerSelect} />
    <span className="ml-[5px] flex w-5"><Cell filled={Boolean(trkMat)} /></span>
    <span className="w-[74px]">
      {trkMat && <Select label="Track Matte" value={trkMat} className="h-3.5 w-[65px]" boxClass={layerSelect} />}
    </span>
    <Spiral />
    <Select label="Parent" value="None" className="mr-5 ml-[7px] h-3.5 w-[88px]" boxClass={layerSelect} />
  </div>
);

const LayerList = () => (
  <div className="text-[11px] text-[#a0a0a0]">
    <LayerRow index={1} name="modmed_disasterSc_OBF_030617_[0000-0454].exr" open color="bg-[#6b6b6b]" cells={[1, 0, 1, 1, 1, 1, 0, 1]} />
    <div className="flex h-[17px] items-center gap-1.5 border-b border-[#202020] bg-[#262626] pl-[89px]">
      <Twirl /> <span className="pt-px">Effects</span>
    </div>
    <div className="flex h-[17px] items-center border-b border-[#202020] bg-[#262626] pl-[120px]">
      <Stopwatch />
      <span className="w-[462px] pl-[7px]">Scale</span>
      <Icon w={12} h={8} className="text-[#b4b4b4]"><path d="M5 6H3.200a2 2 0 010-4H5q2 0 2 2M7 2h1.800a2 2 0 010 4H7Q5 6 5 4" strokeWidth="1.300" /></Icon>
      <span className="ml-[7px]"><span className="text-[#2d8ceb]">100.0</span>,<span className="text-[#2d8ceb]">100.0</span>%</span>
    </div>
    <LayerRow index={2} name="modmed_disasterSc_030617_[0000-0454].exr" color="bg-[#a9cbc7]" trkMat="Luma" cells={[1, 0, 1, 1, 1, 1, 1, 1]} />
  </div>
);

const KeyMark = () => (
  <Icon w={8} h={12} className="-translate-x-1/2 text-[#b4b4b4]"><path d="M0 .5h8M0 11.500h8" /><path d="M4 1v10" strokeWidth="4" /></Icon>
);

const Track = ({ bar, marked }) => (
  <div className={clsx('h-[17px] shrink-0 border-b border-[#202020] px-[7px]', bar ? 'bg-[#323232]' : 'bg-[#2a2a2a]')}>
    <div className={clsx('relative h-full', bar ? 'bg-[#393939]' : 'bg-[#333333]')}>
      {bar && <div className={clsx('h-full rounded-t-sm', bar)} style={{ width: pct(454.5) }} />}
      {marked && (
        <span className="absolute inset-y-0 flex items-center" style={{ left: pct(CURRENT_FRAME) }}>
          <KeyMark />
        </span>
      )}
    </div>
  </div>
);

const RangeBar = ({ className }) => (
  <div className={clsx('flex shrink-0 border-y border-black', className)}>
    <span className="w-1.5 rounded-l-full bg-[#2d8ceb]" />
    <span className="mx-px flex-1 bg-[#626262]" />
    <span className="w-1.5 rounded-r-full bg-[#2d8ceb]" />
  </div>
);

const Tracks = () => (
  <div className="relative flex min-w-0 flex-1 flex-col overflow-hidden border-l-2 border-[#161616] bg-[#232323]">
    <RangeBar className="mt-[7px] h-[10px]" />
    <div className="h-[19px] px-[7px]">
      <div className="relative h-full text-[11px] text-[#a0a0a0]">
        {ticks.map((t) => (
          <span key={t} className="absolute inset-y-0 flex -translate-x-1/2 flex-col items-center justify-between leading-[13px]" style={{ left: pct(t) }}>
            {String(t).padStart(5, '0')}
            <span className="h-1 w-px bg-[#a0a0a0]" />
          </span>
        ))}
      </div>
    </div>
    <RangeBar className="h-[17px]" />
    <div className="h-1 border-b border-black px-[7px]">
      <div className="relative h-full">
        <span className="absolute top-0 h-[3px] w-0.5 bg-[#18a818]" style={{ left: pct(14) }} />
        <span className="absolute top-0 h-[3px] w-2 bg-[#18b818]" style={{ left: pct(75) }} />
      </div>
    </div>
    <Track bar="bg-[#525252]" />
    <Track marked />
    <Track marked />
    <Track bar="bg-[#73847f]" />
    <div className="flex-1 bg-[#262626] px-[7px]">
      <div className="h-full bg-[#303030]" />
    </div>
    {/* current time indicator */}
    <div className="pointer-events-none absolute inset-x-[7px] top-0 bottom-0">
      <div className="absolute top-5 bottom-0 flex w-3 -translate-x-1/2 flex-col items-center" style={{ left: pct(CURRENT_FRAME) }}>
        <svg width="12" height="14" aria-hidden="true">
          <path d="M0 1h12v6l-4 6H4L0 7z" fill="#2d8ceb" />
          <path d="M4 7h4M6 7v6" stroke="#16447a" strokeWidth="1.500" />
        </svg>
        <span className="w-0.5 flex-1 bg-[#2d8ceb]/65" />
      </div>
    </div>
  </div>
);

const Timeline = () => (
  <section className="flex flex-1 flex-col border border-[#1d5c9e] bg-[#232323] text-[11px]">
    <TimelineTabs />
    <div className="flex flex-1">
      <div className="flex w-[1025px] shrink-0 flex-col">
        <TimelineControls />
        <LayerHeader />
        <LayerList />
      </div>
      <Tracks />
      <div className="flex w-4 flex-col items-center pt-[38px] text-[#a8a8a8]">
        <Icon w={12} h={14}><path d="M0 0h12v9l-6 5-6-5z" fill="currentColor" stroke="none" /></Icon>
        <Icon w={14} h={12} className="mt-[7px]"><path d="M8 3h6v6H8z" fill="currentColor" stroke="none" /><path d="M1 7l6-6v8z" strokeWidth="1.300" /><circle cx="6.500" cy="8.500" r="2.800" fill="#232323" strokeWidth="1.300" /></Icon>
      </div>
    </div>
    <footer className="flex h-4 shrink-0 items-center text-[#2d8ceb]">
      <div className="flex w-[1029px] items-center gap-1.5 border-t border-black pt-px pl-[5px]">
        <button type="button" aria-label="Layer Switches"><Icon w={12} h={12}><path d="M1 1h6v7H1zM3 3h6v7H3zM5 5h6v6H5z" strokeWidth="1.200" /></Icon></button>
        <button type="button" aria-label="Transfer Controls"><Icon w={12} h={12}><circle cx="4.500" cy="4.500" r="3.500" strokeWidth="1.300" /><path d="M5 5h6v6H5z" strokeWidth="1.200" /></Icon></button>
        <button type="button" aria-label="In Out Stretch" className="text-[#b4b4b4]"><Icon w={12} h={12}><path d="M4 1Q2 1 3 4T1 6q2 0 2 2t1 3M8 1q2 0 1 3t2 2q-2 0-2 2t-1 3M5 1v10M7 1v10" strokeWidth="1.300" /></Icon></button>
      </div>
      <Icon w={10} h={5} className="ml-[3px] text-[#a0a0a0]"><path d="M0 5l3-2 2-3 4 5z" fill="currentColor" stroke="none" /></Icon>
      <input type="range" aria-label="Timeline zoom" min="0" max="100" defaultValue="0" className="ml-2.5 h-2.5 w-[50px] appearance-none bg-[linear-gradient(#3c3c3c,#3c3c3c)] bg-[length:100%_3px] bg-center bg-no-repeat [&::-webkit-slider-thumb]:h-2.5 [&::-webkit-slider-thumb]:w-2.5 [&::-webkit-slider-thumb]:appearance-none [&::-webkit-slider-thumb]:rounded-full [&::-webkit-slider-thumb]:border-2 [&::-webkit-slider-thumb]:border-[#a0a0a0] [&::-webkit-slider-thumb]:bg-[#232323]" />
      <Icon w={16} h={8} className="ml-[10px] text-[#b4b4b4]"><path d="M0 8l5-6 2 1-3 5zM5 8l5-8 6 8z" fill="currentColor" stroke="none" /></Icon>
    </footer>
  </section>
);

export default function App() {
  return (
    <div className="flex min-h-screen flex-col border-b border-l border-[#1a7ad4] bg-[#161616] font-['DejaVu_Sans_Condensed','DejaVu_Sans',sans-serif]">
      <TitleBar />
      <Toolbar />
      <main className="flex flex-1 flex-col gap-1 pt-0.5 pl-px">
        <div className="flex gap-1">
          <EffectControls />
          <Composition />
          <RightColumn />
        </div>
        <Timeline />
      </main>
    </div>
  );
}
